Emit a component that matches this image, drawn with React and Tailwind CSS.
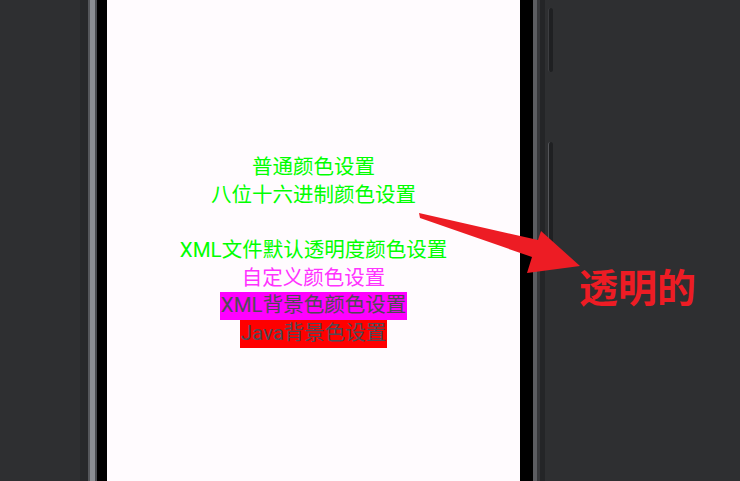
import React from 'react';

// Phone screen lines, top to bottom (null = empty line)
const lines = [
  { text: '普通颜色设置', cls: 'text-[#00ff00]' },
  { text: '八位十六进制颜色设置', cls: 'text-[#00ff00]' },
  null,
  { text: 'XML文件默认透明度颜色设置', cls: 'text-[#00ff00]' },
  { text: '自定义颜色设置', cls: 'text-[#ff33ff]' },
  { text: 'XML背景色颜色设置', cls: 'text-[#4f4a55] bg-[#ff00ff] px-[1px]' },
  { text: 'Java背景色设置', cls: 'text-[#4f4a55] bg-[#ff0000] px-[1px]' },
];

const Arrow = () => (
  <svg
    className="absolute left-0 top-0 pointer-events-none"
    width="740"
    height="481"
    viewBox="0 0 740 481"
  >
    <polygon
      points="419,213 538,240 541,231 580,266 527,273 532,257 420,218"
      fill="#ed1c24"
    />
  </svg>
);

export default function App() {
  return (
    <div
      className="relative w-[740px] h-[481px] overflow-hidden bg-[#2e2f31] flex"
      style={{ fontFamily: 'Roboto, "Noto Sans CJK SC", sans-serif' }}
    >
      {/* left side of the device */}
      <div className="w-[80px] shrink-0" />
      <div className="w-[8px] shrink-0 bg-[#28292b]" />
      <div className="w-[9px] shrink-0 flex">
        <div className="w-[2px] bg-[#55575b]" />
        <div className="w-[5px] bg-[#8b8e93]" />
        <div className="w-[2px] bg-[#4a4c50]" />
      </div>
      <div className="w-[10px] shrink-0 bg-black" />

      {/* screen */}
      <div className="w-[413px] shrink-0 bg-[#fffbfe] flex flex-col items-center pt-[154px] text-[20.5px] leading-[27.7px]">
        {lines.map((line, i) =>
          line ? (
            <div key={i} className={`w-fit h-[27.7px] whitespace-nowrap ${line.cls}`}>
              {line.text}
            </div>
          ) : (
            <div key={i} className="h-[27.7px]" />
          )
        )}
      </div>

      {/* right side of the device */}
      <div className="w-[13px] shrink-0 bg-black" />
      <div className="w-[4px] shrink-0 bg-[#5c5d61]" />
      <div className="w-[3px] shrink-0 bg-[#36373a]" />
      <div className="w-[5px] shrink-0 bg-[#242527]" />
      <div className="flex-1 relative">
        <div className="absolute left-[3px] top-[8px] w-[5px] h-[64px] rounded-sm bg-[#1f2022] border-l border-[#3c3d40]" />
        <div className="absolute left-[3px] top-[142px] w-[5px] h-[122px] rounded-sm bg-[#1f2022] border-l border-[#55565a]" />
        <div className="absolute left-[34px] top-[265px] text-[39px] leading-[48px] font-bold text-[#ed1c24]">
          透明的
        </div>
      </div>

      <Arrow />
    </div>
  );
}
